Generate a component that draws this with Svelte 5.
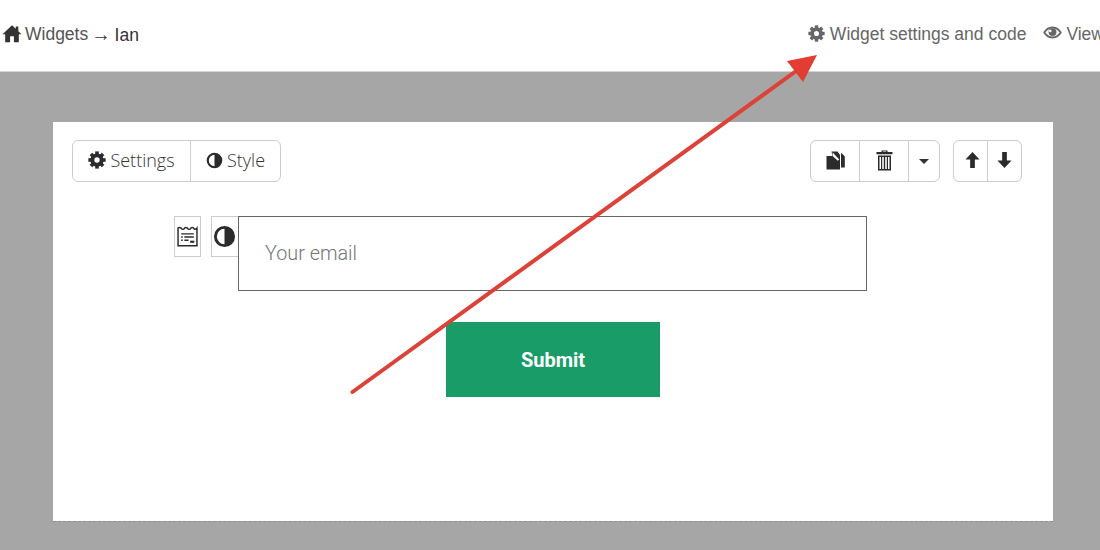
<script>
  const teeth = [0, 45, 90, 135, 180, 225, 270, 315];
</script>

{#snippet gear(cls)}
  <svg class={cls} viewBox="0 0 24 24" aria-hidden="true">
    {#each teeth as t}
      <rect x="9.6" y="0.5" width="4.8" height="6" transform="rotate({t} 12 12)" />
    {/each}
    <circle class="ring" cx="12" cy="12" r="6.2" />
  </svg>
{/snippet}

{#snippet half(cls)}
  <svg class={cls} viewBox="0 0 24 24" aria-hidden="true">
    <path d="M12 1a11 11 0 1 0 0 22a11 11 0 0 0 0-22zM12 4a8 8 0 0 0 0 16z" fill-rule="evenodd" />
  </svg>
{/snippet}

<div class="page">
  <header class="topbar">
    <div class="crumbs">
      <svg class="home" viewBox="0 0 24 24" aria-hidden="true">
        <path d="M12 1.5 L0 13 L3.4 13 L3.4 23 L9.6 23 L9.6 15.5 L14.4 15.5 L14.4 23 L20.6 23 L20.6 13 L24 13 L20 9 L20 3 L16.8 3 L16.8 6 Z" />
      </svg>
      <span class="muted">Widgets</span>
      <span class="dark"><span class="sep">→</span> Ian</span>
    </div>
    <nav class="links">
      <span class="link">{@render gear('nav-gear')}Widget settings and code</span>
      <span class="link">
        <svg class="eye" viewBox="0 0 24 16" aria-hidden="true">
          <path fill-rule="evenodd" d="M12 0.5C6.5 0.5 2.5 4 0.3 8C2.5 12 6.5 15.5 12 15.5C17.5 15.5 21.5 12 23.7 8C21.5 4 17.5 0.5 12 0.5ZM12 3C16.2 3 19.3 5.3 21 8C19.3 10.7 16.2 13 12 13C7.8 13 4.7 10.7 3 8C4.7 5.3 7.8 3 12 3Z" />
          <path fill-rule="evenodd" d="M12 2.5a5 5 0 1 0 0 10a5 5 0 0 0 0-10zM9.2 4.6a1.6 1.6 0 1 0 0 3.2a1.6 1.6 0 0 0 0-3.2z" />
        </svg>View
      </span>
    </nav>
  </header>

  <main class="card">
    <div class="toolbar">
      <div class="group">
        <button class="btn settings">{@render gear('btn-gear')}Settings</button>
        <button class="btn style">{@render half('btn-half')}Style</button>
      </div>
      <div class="actions">
        <div class="group">
          <button class="btn copy" aria-label="Copy">
            <svg viewBox="0 0 19 19" width="19" height="19" aria-hidden="true">
              <path d="M0.5 5H6.5L5.5 0.5H11.5L14 4V18.5H0.5Z" />
              <path class="cut" d="M6.5 1.2L13.2 8.6L11.8 9.8L6.8 5.2Z" />
              <path d="M15 4V2.2H15.8L18.8 5.4V16.5H15Z" />
            </svg>
          </button>
          <button class="btn trash" aria-label="Delete">
            <svg viewBox="0 0 17 21" width="17" height="21" aria-hidden="true">
              <path d="M5.5 2V0.5H11.5V2H16.5V4.2H0.5V2ZM6.8 1.6V2H10.2V1.6Z" fill-rule="evenodd" />
              <path fill-rule="evenodd" d="M2 5.5H15V20.5H2ZM3.5 7V19H5V7ZM6.2 7V19H7.8V7ZM9.2 7V19H10.8V7ZM12 7V19H13.5V7Z" />
            </svg>
          </button>
          <button class="btn caret" aria-label="More"><span class="tri"></span></button>
        </div>
        <div class="group">
          <button class="btn arrow" aria-label="Move up">
            <svg viewBox="0 0 16 18" width="15" height="18" aria-hidden="true">
              <path d="M8 0.5L15.5 8.5H10.5V17.5H5.5V8.5H0.5Z" />
            </svg>
          </button>
          <button class="btn arrow" aria-label="Move down">
            <svg viewBox="0 0 16 18" width="15" height="18" aria-hidden="true">
              <path d="M8 17.5L15.5 9.5H10.5V0.5H5.5V9.5H0.5Z" />
            </svg>
          </button>
        </div>
      </div>
    </div>

    <div class="field-row">
      <span class="handle">
        <svg viewBox="0 0 20 20" width="21" height="21" aria-hidden="true">
          <path class="outline" d="M1 2C2 1.2 3 1.2 4 2C4.8 3.6 6.4 3.6 7.2 2C8 1.2 9 1.2 10 2C10.8 3.6 12.4 3.6 13.2 2C14 1.2 15 1.2 15.8 2C16.6 3.6 18 3.2 19 2V18.8H1Z" />
          <path class="outline" d="M4 7.5H16M4 10.5H5.5M7 10.5H16M4 13.5H5.5M7 13.5H11" />
          <rect x="12.5" y="14" width="4" height="2" />
        </svg>
      </span>
      <span class="handle">{@render half('form-half')}</span>
      <input class="email" type="text" placeholder="Your email" />
    </div>

    <button class="submit">Submit</button>
  </main>

  <svg class="pointer" viewBox="0 0 1100 550" aria-hidden="true">
    <line x1="352.5" y1="392" x2="803" y2="66" />
    <path d="M817 55L787 61L803 82Z" />
  </svg>
</div>

<style>
  :global(body) {
    margin: 0;
  }

  .page {
    position: relative;
    height: 550px;
    overflow: hidden;
    background-color: #a6a6a6;
    font-family: "Liberation Sans", Arial, sans-serif;
  }

  .topbar {
    display: flex;
    justify-content: space-between;
    align-items: center;
    height: 72px;
    box-sizing: border-box;
    padding: 0 0 2px 2px;
    background-color: #fff;
    border-bottom: 1px solid #d4d4d4;
    font-size: 17.5px;
    white-space: nowrap;
  }

  .crumbs {
    display: flex;
    align-items: center;
    gap: 3px;
  }

  .home {
    width: 20px;
    height: 19px;
    margin: -3px 0 0 0;
    fill: #333;
  }

  .muted {
    color: #555;
  }

  .dark {
    color: #333;
    margin-left: 1px;
  }

  .sep {
    margin: 0 -1px;
    font-size: 19.5px;
  }

  .links {
    display: flex;
    align-items: center;
    gap: 17px;
    margin-right: -4px;
    color: #666;
  }

  .link {
    display: flex;
    align-items: center;
    flex-shrink: 0;
  }

  .nav-gear {
    width: 17px;
    height: 17px;
    margin: -3px 5px 0 0;
    fill: #666;
    --ring: #666;
    --hole: #fff;
  }

  .eye {
    width: 19px;
    height: 15px;
    margin: -4px 4px 0 0;
    fill: #666;
  }

  .ring {
    fill: var(--hole);
    stroke: var(--ring);
    stroke-width: 5.2;
  }

  .card {
    width: 1000px;
    height: 400px;
    margin: 50px 0 0 53px;
    padding-top: 18px;
    box-sizing: border-box;
    background-color: #fff;
    background-clip: padding-box;
    border-bottom: 1px dashed #8f8f8f;
  }

  .toolbar {
    display: flex;
    justify-content: space-between;
    padding: 0 31px 0 19px;
  }

  .actions {
    display: flex;
    gap: 13px;
  }

  .group {
    display: flex;
    height: 42px;
    box-sizing: border-box;
    border: 1px solid #ccc;
    border-radius: 6px;
  }

  .btn {
    display: flex;
    align-items: center;
    justify-content: center;
    padding: 0 0 2px;
    border: 0;
    border-left: 1px solid #ccc;
    background: none;
    color: #333;
    font-family: "Open Sans", sans-serif;
    font-size: 18px;
    fill: #2b2b2b;
  }

  .btn:first-child {
    border-left: 0;
  }

  .settings {
    width: 117px;
    font-weight: 300;
  }

  .style {
    width: 90px;
    font-weight: 300;
  }

  .btn-gear {
    width: 18px;
    height: 18px;
    margin-right: 4px;
    --ring: #2b2b2b;
    --hole: #fff;
  }

  .btn-half {
    width: 17px;
    height: 17px;
    margin-right: 4px;
  }

  .copy {
    width: 48px;
  }

  .cut {
    fill: #fff;
  }

  .trash {
    width: 49px;
  }

  .caret {
    width: 31px;
  }

  .tri {
    width: 0;
    height: 0;
    margin-top: 3px;
    border-top: 5px solid #333;
    border-left: 5px solid transparent;
    border-right: 5px solid transparent;
  }

  .arrow {
    width: 34px;
  }

  .arrow:first-child {
    width: 33px;
    padding-left: 3px;
  }

  .field-row {
    display: flex;
    align-items: flex-start;
    margin-top: 34px;
    padding-left: 121px;
  }

  .handle {
    display: flex;
    align-items: center;
    justify-content: center;
    width: 27px;
    height: 41px;
    box-sizing: border-box;
    margin-right: 10px;
    border: 1px solid #ccc;
    fill: #2b2b2b;
  }

  .handle:nth-child(2) {
    margin-right: 0;
    border-right: 0;
  }

  .outline {
    fill: none;
    stroke: #2b2b2b;
    stroke-width: 1.4;
  }

  .form-half {
    width: 23px;
    height: 23px;
    margin-left: -2px;
  }

  .email {
    width: 629px;
    height: 75px;
    box-sizing: border-box;
    padding: 0 26px 1px;
    border: 1px solid #666;
    border-radius: 0;
    outline: none;
    font-family: Roboto, sans-serif;
    font-size: 19.8px;
    font-weight: 300;
  }

  .email::placeholder {
    color: #757575;
    opacity: 1;
  }

  .submit {
    display: block;
    width: 214px;
    height: 75px;
    margin: 31px auto 0;
    border: 0;
    background-color: #1a9c68;
    color: #fff;
    font-family: Roboto, sans-serif;
    font-size: 20px;
    font-weight: 700;
  }

  .pointer {
    position: absolute;
    left: 0;
    top: 0;
    width: 1100px;
    height: 550px;
    pointer-events: none;
  }

  .pointer line {
    stroke: #dc4238;
    stroke-width: 4;
    stroke-linecap: round;
  }

  .pointer path {
    fill: #e23d33;
  }
</style>
